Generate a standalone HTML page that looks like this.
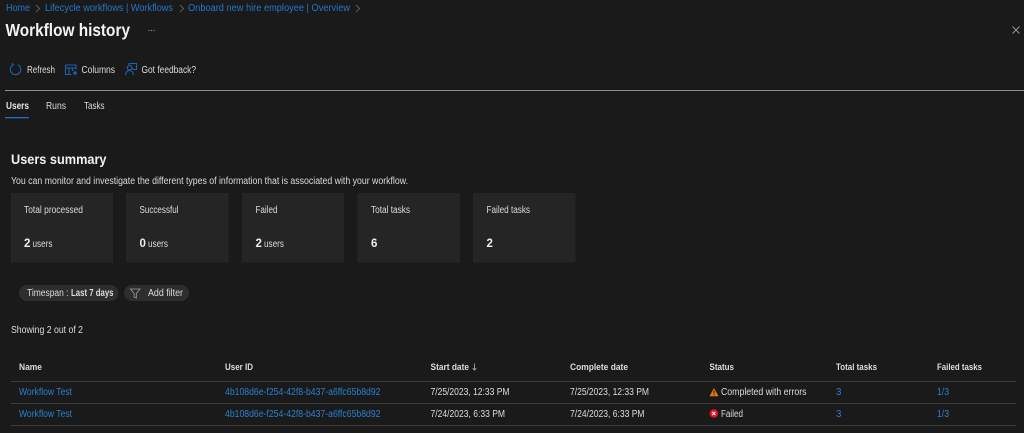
<!DOCTYPE html>
<html lang="en"><head><meta charset="utf-8"><title>Workflow history</title>
<style>
html,body{margin:0;padding:0;background:#1a1a1a;width:1024px;height:433px;overflow:hidden}
svg{display:block;filter:blur(.3px)}
text{font-family:"Liberation Sans",sans-serif;font-size:9.7px;fill:#dcdcdc}
.l{fill:#2378cc}.k{fill:#2a80cf}.b{font-weight:700;fill:#eee}.h{font-weight:700;fill:#dcdcdc;font-size:9.3px}
.card{fill:#252525}
</style></head><body>
<svg width="1024" height="433" viewBox="0 0 1024 433" xmlns="http://www.w3.org/2000/svg">
<rect width="1024" height="433" fill="#1a1a1a"/>
<text class="l" x="6" y="11" textLength="24" lengthAdjust="spacingAndGlyphs">Home</text>
<text class="l" x="45" y="11" textLength="128" lengthAdjust="spacingAndGlyphs">Lifecycle workflows | Workflows</text>
<text class="l" x="188" y="11" textLength="162" lengthAdjust="spacingAndGlyphs">Onboard new hire employee | Overview</text>
<g fill="none" stroke="#6e6e6e" stroke-width=".8"><path d="M36 5l3.500 3.500L36 12M180 5l3.500 3.500L180 12M356 5l3.500 3.500L356 12"/></g>
<text x="5.500" y="36" textLength="124.500" lengthAdjust="spacingAndGlyphs" style="font-size:17.500px;font-weight:700;fill:#f2f2f2">Workflow history</text>
<g fill="#999"><circle cx="149" cy="30.500" r=".6"/><circle cx="151.500" cy="30.500" r=".6"/><circle cx="154" cy="30.500" r=".6"/></g>
<path d="M1012.500 26.500l7 7M1019.500 26.500l-7 7" stroke="#9a9a9a" stroke-width=".9" fill="none"/>

<g fill="none" stroke="#1c62b0" stroke-width="1.100">
<path d="M13.300 64.700a5.200 5.200 0 1 0 4.400 0"/><path d="M12 63l1.500 1.700-2 1" stroke-width=".9"/>
<path d="M65.500 65h10.500v4.500M65.500 65v9.500h6M65.500 68h10.500M69 68v6.500M72.500 68v3"/><circle cx="75" cy="73" r="1.800" fill="#1c62b0" stroke="none"/>
<path d="M129 65v-1.500h7.500v6h-3l-2-1.500M129.500 65.500a2.300 2.300 0 1 0 .1 0M125.500 75c.4-3 2-4.500 4-4.500s3.500 1.500 4 4.500"/>
</g>
<text x="27" y="73" textLength="28" lengthAdjust="spacingAndGlyphs">Refresh</text>
<text x="81.500" y="73" textLength="33.500" lengthAdjust="spacingAndGlyphs">Columns</text>
<text x="141.500" y="73" textLength="54.500" lengthAdjust="spacingAndGlyphs">Got feedback?</text>

<rect x="5" y="90" width="1019" height="1" fill="#8c8c8c"/>
<text x="6" y="109" textLength="23" lengthAdjust="spacingAndGlyphs" style="font-weight:700;fill:#e4e4e4">Users</text>
<text x="46" y="109" textLength="20" lengthAdjust="spacingAndGlyphs">Runs</text>
<text x="84" y="109" textLength="20.500" lengthAdjust="spacingAndGlyphs">Tasks</text>
<rect x="5" y="117" width="24" height="1.300" fill="#1b70c8"/>

<text x="11" y="164" textLength="95.500" lengthAdjust="spacingAndGlyphs" style="font-size:14px;font-weight:700;fill:#f0f0f0">Users summary</text>
<text x="11" y="184" textLength="397" lengthAdjust="spacingAndGlyphs">You can monitor and investigate the different types of information that is associated with your workflow.</text>

<rect class="card" x="11" y="193" width="102" height="69.500"/>
<rect class="card" x="126" y="193" width="102.500" height="69.500"/>
<rect class="card" x="242" y="193" width="102" height="69.500"/>
<rect class="card" x="357.500" y="193" width="102.500" height="69.500"/>
<rect class="card" x="473" y="193" width="102.500" height="69.500"/>

<text x="24" y="213" textLength="59" lengthAdjust="spacingAndGlyphs">Total processed</text>
<text x="139.500" y="213" textLength="39" lengthAdjust="spacingAndGlyphs">Successful</text>
<text x="255.500" y="213" textLength="22" lengthAdjust="spacingAndGlyphs">Failed</text>
<text x="371" y="213" textLength="39" lengthAdjust="spacingAndGlyphs">Total tasks</text>
<text x="486.500" y="213" textLength="43.500" lengthAdjust="spacingAndGlyphs">Failed tasks</text>

<text class="b" x="24" y="247" style="font-size:11.500px">2</text><text x="32.500" y="247" textLength="20" lengthAdjust="spacingAndGlyphs">users</text>
<text class="b" x="139.500" y="247" style="font-size:11.500px">0</text><text x="148" y="247" textLength="20" lengthAdjust="spacingAndGlyphs">users</text>
<text class="b" x="255.500" y="247" style="font-size:11.500px">2</text><text x="264" y="247" textLength="20" lengthAdjust="spacingAndGlyphs">users</text>
<text class="b" x="371" y="247" style="font-size:11.500px">6</text>
<text class="b" x="486.500" y="247" style="font-size:11.500px">2</text>

<rect x="19" y="285" width="99.500" height="16" rx="8" fill="#2e2e2e"/>
<rect x="124" y="285" width="65" height="16" rx="8" fill="#2e2e2e"/>
<text x="27" y="296" textLength="41.500" lengthAdjust="spacingAndGlyphs">Timespan :</text>
<text x="71" y="296" textLength="42.500" lengthAdjust="spacingAndGlyphs" style="font-weight:700">Last 7 days</text>
<path d="M130.500 289h9.500l-3.700 4.500v4.500l-2.200-1v-3.500z" fill="none" stroke="#9aa0a6" stroke-width=".8"/>
<text x="148" y="296" textLength="35" lengthAdjust="spacingAndGlyphs">Add filter</text>

<text x="11" y="333" textLength="72" lengthAdjust="spacingAndGlyphs">Showing 2 out of 2</text>

<text class="h" x="19" y="370" textLength="23" lengthAdjust="spacingAndGlyphs">Name</text>
<text class="h" x="225" y="370" textLength="28" lengthAdjust="spacingAndGlyphs">User ID</text>
<text class="h" x="430.500" y="370" textLength="38.500" lengthAdjust="spacingAndGlyphs">Start date</text>
<path d="M474.500 363.500v6.500M472.700 368.200l1.800 2 1.800-2" fill="none" stroke="#b0b0b0" stroke-width=".8"/>
<text class="h" x="570" y="370" textLength="58" lengthAdjust="spacingAndGlyphs">Complete date</text>
<text class="h" x="709.500" y="370" textLength="24.500" lengthAdjust="spacingAndGlyphs">Status</text>
<text class="h" x="836" y="370" textLength="41" lengthAdjust="spacingAndGlyphs">Total tasks</text>
<text class="h" x="937" y="370" textLength="45" lengthAdjust="spacingAndGlyphs">Failed tasks</text>

<rect x="11" y="381" width="1005" height="1" fill="#3c3c3c"/>
<rect x="11" y="403" width="1005" height="1" fill="#3c3c3c"/>
<rect x="11" y="425" width="1005" height="1" fill="#3c3c3c"/>

<text class="k" x="19" y="395" textLength="53" lengthAdjust="spacingAndGlyphs">Workflow Test</text>
<text class="k" x="225" y="395" textLength="155.500" lengthAdjust="spacingAndGlyphs">4b108d6e-f254-42f8-b437-a6ffc65b8d92</text>
<text x="430.500" y="395" textLength="79" lengthAdjust="spacingAndGlyphs">7/25/2023, 12:33 PM</text>
<text x="570" y="395" textLength="79" lengthAdjust="spacingAndGlyphs">7/25/2023, 12:33 PM</text>
<path d="M714 388l4.500 8.200h-9z" fill="#e07b10"/><rect x="713.500" y="390.500" width="1" height="3" fill="#1a1a1a"/><rect x="713.500" y="394.200" width="1" height="1" fill="#1a1a1a"/>
<text x="721" y="395" textLength="85.500" lengthAdjust="spacingAndGlyphs">Completed with errors</text>
<text class="k" x="836" y="395">3</text>
<text class="k" x="937" y="395" textLength="12" lengthAdjust="spacingAndGlyphs">1/3</text>

<text class="k" x="19" y="417" textLength="53" lengthAdjust="spacingAndGlyphs">Workflow Test</text>
<text class="k" x="225" y="417" textLength="155.500" lengthAdjust="spacingAndGlyphs">4b108d6e-f254-42f8-b437-a6ffc65b8d92</text>
<text x="430.500" y="417" textLength="74.500" lengthAdjust="spacingAndGlyphs">7/24/2023, 6:33 PM</text>
<text x="570" y="417" textLength="74.500" lengthAdjust="spacingAndGlyphs">7/24/2023, 6:33 PM</text>
<circle cx="713.800" cy="413.500" r="4.200" fill="#e81123"/><path d="M712.200 411.900l3.200 3.200M715.400 411.900l-3.200 3.200" stroke="#fff" stroke-width="1" fill="none"/>
<text x="721" y="417" textLength="22" lengthAdjust="spacingAndGlyphs">Failed</text>
<text class="k" x="836" y="417">3</text>
<text class="k" x="937" y="417" textLength="12" lengthAdjust="spacingAndGlyphs">1/3</text>
</svg>
</body></html>
